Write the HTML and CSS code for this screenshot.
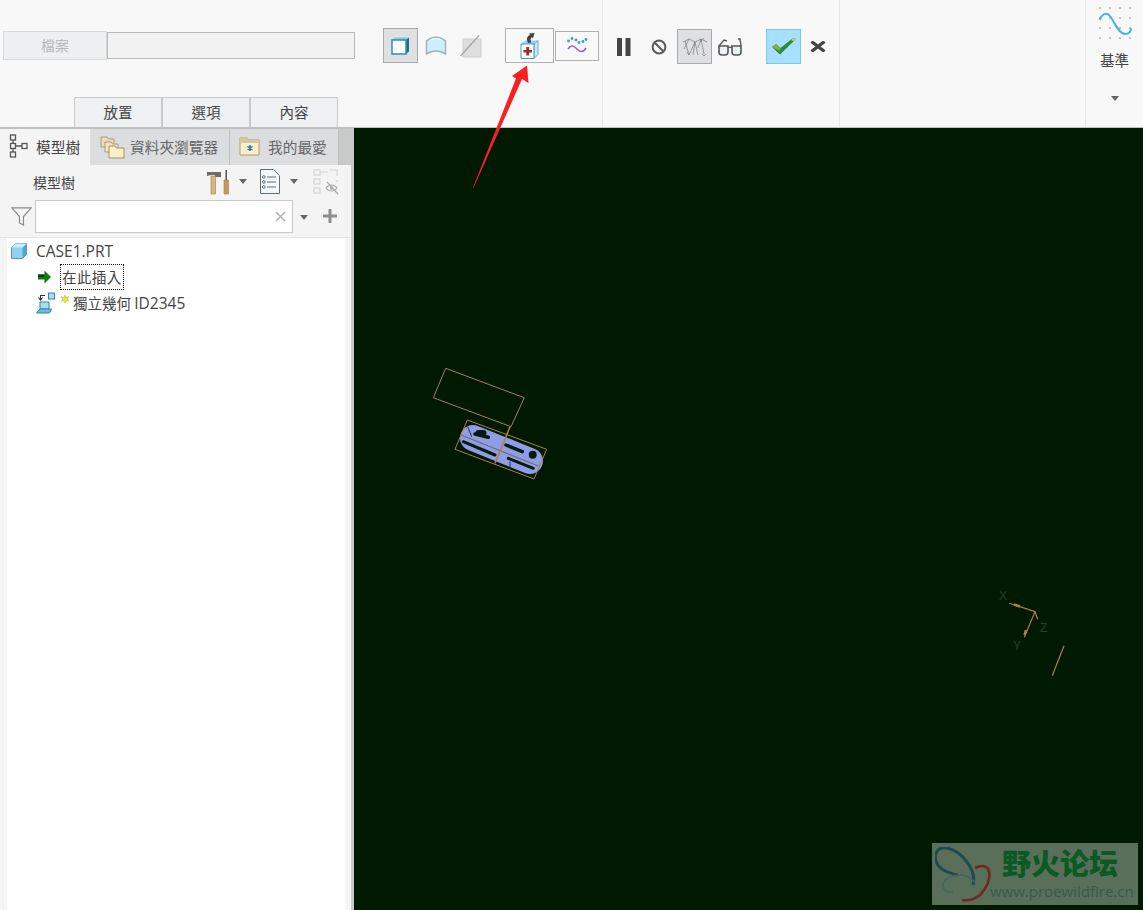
FILE: index.html
```html
<!DOCTYPE html>
<html lang="zh-Hant">
<head>
<meta charset="utf-8">
<title>CASE1.PRT</title>
<link rel="stylesheet" href="styles.css">
</head>
<body>
<header class="ribbon">
  <section class="group group-main">
    <div class="form-col">
      <div class="file-row">
        <button class="file-btn">檔案</button>
        <div class="file-field"></div>
      </div>
      <nav class="sub-tabs">
        <span class="sub-tab">放置</span><span class="sub-tab">選項</span><span class="sub-tab">內容</span>
      </nav>
    </div>
    <div class="tool-row">
      <button class="tool tool-on">
        <svg width="22" height="22" viewBox="0 0 22 22"><path d="M2 5l3-2.500h14L16 5z" fill="#7fc8e8"/><path d="M16 5l3-2.500v14L16 19z" fill="#1a6f96"/><path d="M2 5h14v14H2z" fill="#fff" stroke="#2b8fc0" stroke-width="1.500"/></svg>
      </button>
      <button class="tool">
        <svg width="24" height="22" viewBox="0 0 24 22"><path d="M2.500 6C8 1 16 1 21.500 6v13C16 15 8 15 2.500 19z" fill="#cdeefb" stroke="#9ab4bf" stroke-width="1.500"/><path d="M6 5C10 3 14 3 18 5" stroke="#fff" fill="none"/></svg>
      </button>
      <button class="tool">
        <svg width="24" height="24" viewBox="0 0 24 24"><rect x="4" y="5" width="18" height="18" fill="#dedede" stroke="#cfcfcf"/><path d="M1.500 22 20 1.500" stroke="#a9a9a9" stroke-width="1.500"/></svg>
      </button>
      <button class="tool tool-repair">
        <svg width="22" height="30" viewBox="0 0 22 30"><path d="M2 13l4-3.500h13L15 13z" fill="#9fd6ee"/><path d="M15 13l4-3.500v14L15 27.500z" fill="#cfeaf6" stroke="#3f9cc8" stroke-width=".8"/><path d="M2 13h13v14.500H2z" fill="#fff" stroke="#3f9cc8"/><path d="M7.300 16h2.800v2.900H13v2.600h-2.900v2.900H7.300v-2.900H4.400v-2.600h2.900z" fill="#a22c2c"/><path d="M9 12C7 8 8 5 11 4L10 2.500l5.500-.5-1.500 5.500-1-1.500C11.500 7 11 9 12.500 11.500z" fill="#444"/></svg>
      </button>
      <button class="tool tool-wave">
        <svg width="22" height="22" viewBox="0 0 22 22"><g fill="#3f9ac9"><circle cx="2.500" cy="6" r="1.400"/><circle cx="6" cy="3.500" r="1.400"/><circle cx="10" cy="5" r="1.400"/><circle cx="13" cy="7.500" r="1.400"/><circle cx="17" cy="6.500" r="1.400"/><circle cx="20" cy="4.500" r="1.400"/></g><path d="M2 14c3-5 6-3 9 0s6 4 9-1" fill="none" stroke="#9a64cf" stroke-width="1.600"/></svg>
      </button>
    </div>
  </section>
  <section class="group group-flow">
    <button class="tool">
      <svg width="18" height="18" viewBox="0 0 18 18"><path d="M2 0h5v18H2zM10.500 0h5v18h-5z" fill="#454545"/></svg>
    </button>
    <button class="tool">
      <svg width="18" height="18" viewBox="0 0 18 18"><circle cx="9" cy="9" r="6.400" fill="none" stroke="#5a5a5a" stroke-width="2"/><path d="M4.500 4.500l9 9" stroke="#5a5a5a" stroke-width="2"/></svg>
    </button>
    <button class="tool tool-on tool-shift">
      <svg width="28" height="28" viewBox="0 0 28 28" fill="none" stroke="#777" stroke-width=".7"><path d="M2 9l6-3 6 3 6-3 6 3M4 8l4 14 6-13 3 13M20 6l3 15M14 9l-2 13M8 6l-5 10M20 6l-3 9M23 5 19 9M21 21l2 2 2-2M8 22l-2-3"/></svg>
    </button>
    <button class="tool">
      <svg width="26" height="18" viewBox="0 0 26 18"><path d="M2 8h9v6c0 2-1 3-3 3H5c-2 0-3-1-3-3zM15 8h9v6c0 2-1 3-3 3h-3c-2 0-3-1-3-3z" fill="#e9f3f6" stroke="#555" stroke-width="1.600"/><path d="M11 10c1-1 3-1 4 0M2 8l5-6 3 1M24 8l-1-7-2 0" fill="none" stroke="#555" stroke-width="1.400"/></svg>
    </button>
    <button class="tool tool-ok">
      <svg width="24" height="17" viewBox="0 0 24 17"><path d="M0 9l4-3 4.500 4L21 0l3 1L8 16.500z" fill="#2f8a3b"/><path d="M21 0l3 1-2 2-3-.8z" fill="#c8d84a"/><path d="M0 9l4-3 4.500 4L8 13z" fill="#7fb24a"/></svg>
    </button>
    <button class="tool tool-cancel">
      <svg width="16" height="11" viewBox="0 0 16 11"><path d="M1.500 .5 14.500 10.500M14.500 .5 1.500 10.500" stroke="#444" stroke-width="3.200"/></svg>
    </button>
  </section>
  <section class="group group-empty"></section>
  <section class="group group-datum">
    <svg class="datum-icon" width="34" height="34" viewBox="0 0 34 34">
      <g fill="#666"><circle cx="2" cy="3" r=".7"/><circle cx="12" cy="3" r=".7"/><circle cx="22" cy="3" r=".7"/><circle cx="32" cy="3" r=".7"/><circle cx="2" cy="13" r=".7"/><circle cx="12" cy="13" r=".7"/><circle cx="22" cy="13" r=".7"/><circle cx="32" cy="13" r=".7"/><circle cx="2" cy="23" r=".7"/><circle cx="12" cy="23" r=".7"/><circle cx="22" cy="23" r=".7"/><circle cx="32" cy="23" r=".7"/><circle cx="2" cy="33" r=".7"/><circle cx="12" cy="33" r=".7"/><circle cx="22" cy="33" r=".7"/><circle cx="32" cy="33" r=".7"/></g>
      <path d="M1.500 15C5 7 10 7 14 14s8 15 13 15 6-3 6-6" fill="none" stroke="#45b4e4" stroke-width="2"/>
    </svg>
    <span class="datum-label">基準</span>
    <span class="caret datum-caret"></span>
  </section>
</header>

<main class="workspace">
  <aside class="side">
    <div class="side-tabs">
      <div class="side-tab side-tab-on">
        <svg width="20" height="24" viewBox="0 0 20 24" fill="none" stroke="#555" stroke-width="1.300"><rect x="1.500" y="1" width="5" height="5"/><rect x="1.500" y="9.500" width="5" height="5"/><rect x="1.500" y="18" width="5" height="5"/><rect x="13" y="9.500" width="5" height="5"/><path d="M4 6v3.500M4 14.500V18M6.500 12H13"/></svg>
        <span>模型樹</span>
      </div>
      <div class="side-tab side-tab-folders">
        <svg width="25" height="25" viewBox="0 0 25 25"><path d="M1 3h6l1.500 2H14v8H1z" fill="#ecdcb6" stroke="#a49a80"/><path d="M5 8h6l1.500 2H18v8H5z" fill="#f3e3bb" stroke="#a49a80"/><path d="M9 12h6l1.500 2H24v10H9z" fill="#fbeecd" stroke="#a88f5c"/></svg>
        <span>資料夾瀏覽器</span>
      </div>
      <div class="side-tab side-tab-fav">
        <svg width="22" height="20" viewBox="0 0 22 20"><path d="M1 2h7l2 2h10v15H1z" fill="#fbeecd" stroke="#b49a63"/><path d="M1 2h7l2 2h10v3H1z" fill="#d8c79d"/><path d="M11 9v6M8.400 10.500l5.200 3M13.600 10.500l-5.200 3" stroke="#1d6f9e" stroke-width="1.400"/></svg>
        <span>我的最愛</span>
      </div>
    </div>
    <div class="side-tools">
      <span class="side-title">模型樹</span>
      <svg class="ico-tools" width="24" height="26" viewBox="0 0 24 26"><path d="M1 3h14v5H9v-2H5L1 7z" fill="#6b6b6b"/><path d="M5 7h4.500v18H5z" fill="#d8b77e" stroke="#9c7d48" stroke-width=".6"/><path d="M19.500 1h1.500v10h-1.500z" fill="#555"/><path d="M18 11h4.500v14H18z" fill="#c99a57" stroke="#9c7d48" stroke-width=".6"/></svg>
      <span class="caret caret-tools"></span>
      <svg class="ico-list" width="20" height="25" viewBox="0 0 20 25" fill="none" stroke="#5f6f78"><path d="M.5.500h13l6 6v18H.5z" fill="#f4f8fa"/><path d="M7 8h9M7 13h9M7 18h9"/><circle cx="3.800" cy="8" r="1.300"/><circle cx="3.800" cy="13" r="1.300"/><circle cx="3.800" cy="18" r="1.300"/></svg>
      <span class="caret caret-list"></span>
      <svg class="ico-hide" width="26" height="26" viewBox="0 0 26 26" fill="none" stroke="#d4d4d4" stroke-width="1.200"><rect x="1" y="1" width="6" height="5"/><rect x="1" y="10" width="6" height="5"/><rect x="1" y="19" width="6" height="5"/><path d="M7 3h8M16 1h8v6M24 11v2"/><path d="M13 19c3-4 8-4 11 0-3 4-8 4-11 0z" stroke="#aaa"/><circle cx="18.500" cy="19" r="1.700" fill="#aaa" stroke="none"/><path d="M14 13l11 12" stroke="#aaa"/></svg>
    </div>
    <div class="filter-row">
      <svg class="ico-filter" width="21" height="19" viewBox="0 0 21 19"><path d="M.8.800h19.400L12.500 9.500V18l-4-2V9.500z" fill="#f4f4f4" stroke="#8a8a8a" stroke-width="1.200"/></svg>
      <div class="filter-input">
        <svg width="11" height="11" viewBox="0 0 11 11"><path d="M1 1l9 9M10 1l-9 9" stroke="#b0b0b0" stroke-width="1.500"/></svg>
      </div>
      <span class="caret caret-filter"></span>
      <svg class="ico-plus" width="14" height="14" viewBox="0 0 14 14"><path d="M5.500 0h3v5.500H14v3H8.500V14h-3V8.500H0v-3h5.500z" fill="#8e8e8e"/></svg>
    </div>
    <div class="tree-wrap">
      <div class="tree">
        <div class="tree-row tree-root">
          <svg width="16" height="16" viewBox="0 0 16 16"><path d="M.5 4.500 4.500.500h11v11l-4 4h-11z" fill="#8fd4ef" stroke="#4f97b8"/><path d="M11.500 4.500 15.500.500v11l-4 4z" fill="#4fa9cf"/><path d="M.5 4.500 4.500.500h11l-4 4z" fill="#c9eefa"/></svg>
          <span class="latin">CASE1.PRT</span>
        </div>
        <div class="tree-row tree-insert">
          <svg width="13" height="14" viewBox="0 0 13 14"><path d="M0 4.500h6.500V.500L13 7l-6.500 6.500v-4H0z" fill="#0e7a10"/><path d="M0 4.500h6.500V7H0z" fill="#0b3d0b"/></svg>
          <span class="insert-box">在此插入</span>
        </div>
        <div class="tree-row tree-geo">
          <svg width="20" height="22" viewBox="0 0 20 22"><rect x="12.500" y="1" width="6" height="6" fill="#a8def4" stroke="#2e86ad"/><path d="M9 3.500H4.500V7M2.500 5.500 4.500 8l2-2.500" fill="none" stroke="#333" stroke-width="1.100"/><path d="M4 10h9v7H4z" fill="#a8def4" stroke="#2e86ad"/><path d="M4 17 .5 21h13l2-4z" fill="#6fbcdc" stroke="#2e86ad"/></svg>
          <svg class="star" width="8" height="8" viewBox="0 0 11 11"><path d="M5.500 0 7 3.500 10.500 2 8.500 5.500l2.500 2.300L7.500 8 5.500 11 4 8 .5 8.500 2.500 5.500 0 2.500 4 3.500z" fill="#f4ee00" stroke="#a9a99a" stroke-width=".8"/></svg>
          <span>獨立幾何 <span class="latin">ID2345</span></span>
        </div>
      </div>
      <div class="tree-scroll"></div>
    </div>
  </aside>

  <section class="canvas">
    <svg class="model" viewBox="354 128 789 782" width="789" height="782">
      <path d="M445.700 368.300 524.300 397.700 511 426.700 433.300 397.700z" class="edge"/>
      <path d="M473 438 530 461" class="part"/>
      <g class="slot">
        <path d="M475 434 488.300 437.300" stroke-width="3.500"/>
        <path d="M478.500 433h5" stroke-width="6"/>
        <path d="M463.300 441.700 495 455" stroke-width="3"/>
        <path d="M508.300 458.300 533.300 468.300" stroke-width="3"/>
        <path d="M506 445 522.300 451.700" stroke-width="3.500"/>
      </g>
      <circle cx="532.700" cy="454.700" r="4" fill="#041c08"/>
      <path d="M461 435 538.300 466" class="mid"/>
      <path d="M467.700 426.700 471.700 436.700M510 461.700V470" class="thin"/>
      <path d="M467.300 420 546.700 449.300 534 479 455 449.300z" class="edge"/>
      <path d="M510 426.700 495 463.300" class="edge edge-b"/>
      <path d="M1009.300 603.300 1035 611.700 1024.300 637.300M1035 611.700 1037.700 619.300" class="axis"/>
      <path d="M1014 604.500 1020 606.500M1026 630 1024.500 635" class="axis axis-b"/>
      <path d="M1064 645.700 1052.300 675.700" class="axis"/>
    </svg>
    <span class="axis-label axis-x">X</span>
    <span class="axis-label axis-z">Z</span>
    <span class="axis-label axis-y">Y</span>
    <div class="stamp">
      <svg class="stamp-logo" width="58" height="56" viewBox="0 0 58 56" fill="none">
        <path d="M38 38C42 22 26 4 12 1 2-1-1 8 1 14c2 8 12 12 22 14" stroke="#1f4a50" stroke-width="3"/>
        <path d="M40 21c6-3 12-3 14 3 2 8-3 18-9 24-5 4-12 6-18 5" stroke="#6f2a20" stroke-width="2.600"/>
        <path d="M40 35c-5-5-11-8-17-7-8 1-15 5-15 10 0 5 4 8 10 7" stroke="#46655f" stroke-width="1.800"/>
      </svg>
      <div class="stamp-text">
        <div class="stamp-name">野火论坛</div>
        <div class="stamp-url">www.proewildfire.cn</div>
      </div>
    </div>
  </section>
</main>

<svg class="arrow" width="60" height="125" viewBox="0 0 60 125"><path d="M55 .5 56.500 18 50 14 1.500 123 1 122.500 44 13.500 40 11z" fill="#fb1f1f"/></svg>
</body>
</html>
```
FILE: styles.css
```css
* { box-sizing: border-box; }
html, body { margin: 0; height: 100%; }
body {
  width: 1143px;
  height: 910px;
  overflow: hidden;
  position: relative;
  display: flex;
  flex-direction: column;
  background: #f8f8f8;
  font-family: "Noto Sans CJK TC", "Noto Sans", sans-serif;
  font-size: 14.5px;
  color: #444;
}
button {
  font: inherit;
  padding: 0;
  margin: 0;
  background: none;
  border: 0;
}
.ribbon {
  flex: none;
  height: 128px;
  display: flex;
  background: #f8f8f8;
  border-bottom: 1px solid #c0c0c0;
}
.group { height: 127px; border-right: 1px solid #e6e6e6; }
.group-main { width: 603px; display: flex; }
.form-col { width: 383px; padding: 31px 0 0 3px; display: flex; flex-direction: column; }
.file-row { display: flex; height: 29px; align-items: center; }
.file-btn {
  width: 104px;
  height: 29px;
  background: #eeeff0;
  border: 1px solid #d8d8d8;
  color: #b8b8b8;
  font-size: 14px;
  padding-bottom: 2px;
}
.file-field {
  width: 248px;
  height: 27px;
  background: #f2f2f2;
  border: 1px solid #b8b8b8;
}
.sub-tabs { display: flex; margin: 37px 0 0 71px; height: 30px; }
.sub-tab {
  width: 88px;
  height: 30px;
  background: #eff0f1;
  border: 1px solid #cacaca;
  border-bottom: 0;
  text-align: center;
  line-height: 27px;
}
.tool-row { display: flex; align-items: flex-start; padding-top: 28px; }
.tool {
  width: 35px;
  height: 35px;
  display: flex;
  align-items: center;
  justify-content: center;
  flex: none;
}
.tool-on { background: #dfe0e1; border: 1px solid #a9a9a9; }
.tool-shift { margin-left: 1px; }
.tool-repair {
  width: 49px;
  margin-left: 17px;
  background: #f8f8f8;
  border: 1px solid #b0b0b0;
}
.tool-wave {
  width: 44px;
  height: 30px;
  margin: 3px 0 0 1px;
  border: 1px solid #b0b0b0;
}
.group-flow {
  width: 237px;
  display: flex;
  align-items: flex-start;
  padding: 29px 0 0 3px;
}
.tool-ok { margin-left: 19px; background: #a6dfff; border: 1px solid #7cc7ef; }
.tool-cancel { width: 34px; }
.group-empty { width: 246px; }
.group-datum {
  flex: 1;
  border-right: 0;
  border-left: 1px solid #e6e6e6;
  margin-left: -1px;
  display: flex;
  flex-direction: column;
  align-items: center;
  padding-top: 5px;
}
.datum-label { margin-top: 10px; line-height: 22px; }
.caret {
  display: block;
  width: 0;
  height: 0;
  border-left: 4.5px solid transparent;
  border-right: 4.5px solid transparent;
  border-top: 5px solid #666;
  flex: none;
}
.datum-caret { margin-top: 25px; }

.workspace { flex: 1; min-height: 0; display: flex; }
.side {
  width: 354px;
  flex: none;
  display: flex;
  flex-direction: column;
  background: #f4f4f4;
  border-top: 1px solid #c0c0c0;
  border-right: 3px solid #c8c8c8;
}
.side-tabs { height: 36px; display: flex; background: #c8caca; flex: none; }
.side-tab {
  display: flex;
  align-items: center;
  background: #dcdddf;
  border-right: 1px solid #bfc1c1;
  color: #666;
  white-space: nowrap;
  flex: none;
  font-size: 14.7px;
  padding-bottom: 2px;
}
.side-tab svg { flex: none; }
.side-tab-on { width: 90px; background: #f4f4f4; color: #444; padding-left: 9px; gap: 7px; border-right: 0; }
.side-tab-folders { width: 140px; padding-left: 10px; gap: 5px; }
.side-tab-fav { width: 109px; padding-left: 9px; gap: 7px; }
.side-tools { height: 35px; display: flex; align-items: center; flex: none; padding: 0 0 2px 33px; }
.side-title { width: 173px; color: #444; font-size: 14px; }
.ico-tools { flex: none; }
.caret-tools { margin-left: 9px; }
.ico-list { margin-left: 13px; }
.caret-list { margin-left: 10px; }
.ico-hide { margin-left: 15px; }
.filter-row { height: 38px; display: flex; align-items: flex-start; padding: 0 0 0 11px; flex: none; border-bottom: 1px solid #e2e2e2; }
.ico-filter { margin: 7px 3px 0 0; flex: none; }
.filter-input {
  width: 258px;
  height: 33px;
  background: #fff;
  border: 1px solid #c8c8c8;
  display: flex;
  align-items: center;
  justify-content: flex-end;
  padding-right: 6px;
}
.caret-filter { margin: 15px 0 0 7px; }
.ico-plus { margin: 9px 0 0 15px; }
.tree-wrap { flex: 1; min-height: 0; display: flex; padding-left: 7px; }
.tree { width: 338px; background: #fff; }
.tree-scroll { flex: 1; background: #f5f5f5; }
.tree-row { display: flex; align-items: center; height: 26px; white-space: nowrap; color: #444; }
.latin { font-family: "Open Sans", sans-serif; font-size: 15.5px; }
.tree-root { padding-left: 4px; gap: 9px; }
.tree-insert { padding-left: 31px; gap: 9px; }
.insert-box { border: 1px dotted #111; padding: 0 1px; line-height: 24px; height: 26px; letter-spacing: .4px; }
.tree-geo { padding-left: 29px; }
.star { margin: -8px 4px 0 5px; }

.canvas { flex: 1; position: relative; background: #001a02; overflow: hidden; }
.model { position: absolute; left: 0; top: 0; display: block; }
.edge { fill: none; stroke: #b37f3c; stroke-width: 1; }
.edge-b { stroke-width: 1.500; }
.part { fill: none; stroke: #919ce9; stroke-width: 26; stroke-linecap: round; }
.slot path { fill: none; stroke: #041c08; stroke-linecap: round; }
.mid { stroke: #6f7066; stroke-width: 1.200; fill: none; }
.thin { stroke: #1e2e22; stroke-width: 1; fill: none; }
.axis { stroke: #b37f3c; stroke-width: 1.200; fill: none; }
.axis-b { stroke-width: 2.500; }
.axis-label { position: absolute; font: 12px "Liberation Sans", sans-serif; color: #2e3c2e; }
.axis-x { left: 645px; top: 461px; }
.axis-z { left: 686px; top: 493px; }
.axis-y { left: 659px; top: 511px; }
.stamp {
  position: absolute;
  left: 578px;
  top: 715px;
  width: 206px;
  height: 62px;
  background: #5a6f5a;
  display: flex;
  padding: 4px 0 0 3px;
}
.stamp-logo { flex: none; }
.stamp-text { margin-left: -1px; }
.stamp-name {
  font-family: "Noto Sans CJK SC", sans-serif;
  font-weight: 900;
  font-size: 29px;
  line-height: 30px;
  padding-left: 10px;
  color: #0b5a25;
}
.stamp-url {
  font-family: "Open Sans", sans-serif;
  font-size: 15px;
  line-height: 20px;
  margin: 4px 0 0 -2px;
  color: #38594f;
}
.arrow { position: absolute; left: 472px; top: 65px; }
```
